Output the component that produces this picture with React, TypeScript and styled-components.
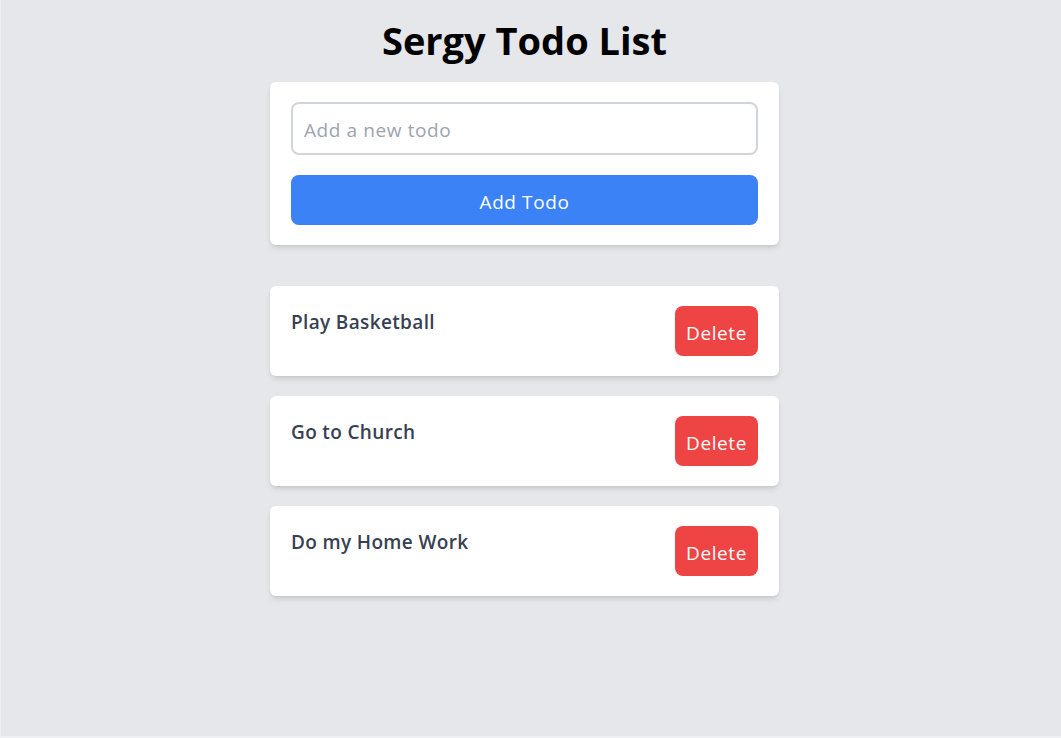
import React, { useState } from "react";
import styled, { createGlobalStyle } from "styled-components";

const Global = createGlobalStyle`
  html, body { margin: 0; padding: 0; }
  body {
    background: #e5e7eb;
    font-family: "Open Sans", "Noto Sans", "Liberation Sans", sans-serif;
  }
  * { box-sizing: border-box; }
`;

const Page = styled.div`
  min-height: 738px;
  background: #e5e7eb;
  border-left: 1px solid #eef0f3;
  border-bottom: 2px solid #eef0f3;
  padding: 18px 13px 20px 0;
  display: flex;
  flex-direction: column;
  align-items: center;
`;

const Title = styled.h1`
  margin: 0 0 20px;
  font-size: 38px;
  line-height: 44px;
  font-weight: 700;
  color: #000;
  text-align: center;
`;

const Column = styled.div`
  width: 509px;
  display: flex;
  flex-direction: column;
`;

const Card = styled.div<{ $gap?: number }>`
  background: #fff;
  border-radius: 6px;
  box-shadow: 0 4px 6px -1px rgba(0, 0, 0, 0.1), 0 2px 4px -2px rgba(0, 0, 0, 0.1);
  padding: 20px 21px;
  margin-bottom: ${(p) => p.$gap ?? 20}px;
`;

const Input = styled.input`
  display: block;
  width: 100%;
  height: 53px;
  border: 2px solid #d1d5db;
  border-radius: 8px;
  padding: 2px 11px 0;
  font-family: inherit;
  font-size: 19px;
  letter-spacing: 0.6px;
  color: #111827;
  outline: none;
  margin-bottom: 20px;
  &::placeholder { color: #9ca3af; }
`;

const Button = styled.button<{ $variant: "blue" | "red" }>`
  height: 50px;
  border: none;
  border-radius: 8px;
  font-family: inherit;
  font-size: 19px;
  letter-spacing: 0.6px;
  color: #fff;
  cursor: pointer;
  background: ${(p) => (p.$variant === "blue" ? "#3b82f6" : "#ef4444")};
  padding: 3px 11px 0;
`;

const WideButton = styled(Button)`
  display: block;
  width: 100%;
`;

const Row = styled.div`
  display: flex;
  justify-content: space-between;
  align-items: flex-start;
`;

const TodoText = styled.span`
  font-size: 19px;
  letter-spacing: 0.35px;
  line-height: 32px;
  font-weight: 600;
  color: #374151;
`;

export default function App() {
  const [todos, setTodos] = useState(["Play Basketball", "Go to Church", "Do my Home Work"]);
  const [text, setText] = useState("");
  return (
    <>
      <Global />
      <Page>
        <Title>Sergy Todo List</Title>
        <Column>
          <Card $gap={41}>
            <Input
              placeholder="Add a new todo"
              value={text}
              onChange={(e) => setText(e.target.value)}
            />
            <WideButton
              $variant="blue"
              onClick={() => {
                if (text.trim()) {
                  setTodos([...todos, text.trim()]);
                  setText("");
                }
              }}
            >
              Add Todo
            </WideButton>
          </Card>
          {todos.map((t, i) => (
            <Card key={i}>
              <Row>
                <TodoText>{t}</TodoText>
                <Button $variant="red" onClick={() => setTodos(todos.filter((_, j) => j !== i))}>
                  Delete
                </Button>
              </Row>
            </Card>
          ))}
        </Column>
      </Page>
    </>
  );
}
